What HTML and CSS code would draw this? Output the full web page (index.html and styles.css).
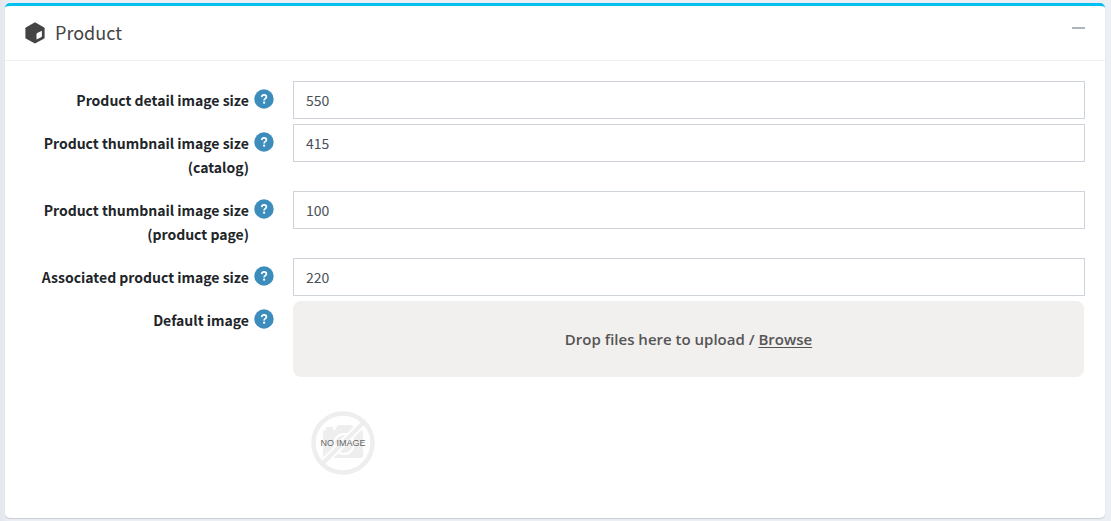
FILE: index.html
```html
<!DOCTYPE html>
<html lang="en">
<head>
<meta charset="utf-8">
<meta name="viewport" content="width=device-width, initial-scale=1">
<title>Product</title>
<link rel="stylesheet" href="styles.css">
</head>
<body>
<svg class="sprite" aria-hidden="true">
  <symbol id="help" viewBox="0 0 20 20">
    <circle cx="10" cy="10" r="9.7" fill="#3c8dbc"/>
    <path d="M7.7 8.1C7.8 6.7 8.7 5.9 10.1 5.9c1.400 0 2.300.8 2.300 2 0 1.700-2.300 1.900-2.300 3.500" fill="none" stroke="#fff" stroke-width="1.700"/>
    <circle cx="10.100" cy="13.700" r="1.150" fill="#fff"/>
  </symbol>
</svg>
<section class="card">
  <header class="card-header">
    <svg class="cube" viewBox="0 0 20 22" aria-hidden="true">
      <path d="M10 .3 18.800 5.200c.5.3.8.6.8 1.100v9.400c0 .5-.3.800-.8 1.100L10 21.600 1.200 16.800c-.5-.3-.8-.6-.8-1.100V6.300c0-.5.300-.8.800-1.100z" fill="#444"/>
      <path d="M11.500 12.200q0-.9.800-1.300L16.900 8.800v5.200q0 .9-.8 1.300L11.500 17.600z" fill="#fff"/>
    </svg>
    <h1 class="card-title">Product</h1>
    <button class="collapse" type="button" aria-label="Collapse"></button>
  </header>
  <form class="card-body">
    <div class="row">
      <div class="label-cell"><label for="detail">Product detail image size</label><svg class="help"><use href="#help"/></svg></div>
      <input class="field" id="detail" type="text" value="550">
    </div>
    <div class="row">
      <div class="label-cell"><label for="catalog">Product thumbnail image size<br>(catalog)</label><svg class="help"><use href="#help"/></svg></div>
      <input class="field" id="catalog" type="text" value="415">
    </div>
    <div class="row">
      <div class="label-cell"><label for="page">Product thumbnail image size<br>(product page)</label><svg class="help"><use href="#help"/></svg></div>
      <input class="field" id="page" type="text" value="100">
    </div>
    <div class="row">
      <div class="label-cell"><label for="associated">Associated product image size</label><svg class="help"><use href="#help"/></svg></div>
      <input class="field" id="associated" type="text" value="220">
    </div>
    <div class="row">
      <div class="label-cell"><span>Default image</span><svg class="help"><use href="#help"/></svg></div>
      <div class="upload">
        <div class="dropzone">Drop files here to upload /&nbsp;<a class="browse" href="#">Browse</a></div>
        <svg class="preview" viewBox="0 0 64 64" role="img" aria-label="No image">
          <g fill="#eee">
            <path d="M12 21q0-2 2-2h1v-3h7v3h2l2-3.500q.5-1.500 2-1.500H40q1.500 0 2 1.500L43.500 19H50q2 0 2 2V45q0 2-2 2H14q-2 0-2-2z"/>
            <circle cx="33" cy="33" r="11" fill="#fff"/>
            <circle cx="33" cy="33" r="9"/>
          </g>
          <path d="M10 54 54 10" stroke="#fff" stroke-width="8"/>
          <path d="M11 53 53 11" stroke="#eee" stroke-width="4"/>
          <circle cx="32" cy="32" r="29.500" fill="none" stroke="#eee" stroke-width="4.500"/>
          <text class="preview-text" x="32" y="35" text-anchor="middle">NO IMAGE</text>
        </svg>
      </div>
    </div>
  </form>
</section>
</body>
</html>
```
FILE: styles.css
```css
* { box-sizing: border-box; }
body {
  margin: 0;
  padding: 3px 6px 2px 5px;
  background: linear-gradient(to right, #e3e7ee, #ecf0f5 12px);
  font-family: "Noto Sans CJK JP", "Noto Sans", sans-serif;
  font-size: 14px;
  line-height: 24px;
  color: #212529;
}
.sprite { display: none; }
.card {
  background: #fff;
  border-top: 3px solid #00c0ef;
  border-radius: 5px;
  box-shadow: 0 1px 1px rgba(0, 0, 0, .15);
}
.card-header {
  display: flex;
  align-items: center;
  height: 55px;
  padding: 0 20px;
  border-bottom: 1px solid #f1f1f2;
}
.cube { width: 20px; height: 22px; margin-right: 10px; }
.card-title { margin: 0; padding-bottom: 2px; font-size: 18px; font-weight: 400; color: #444; }
.collapse {
  align-self: flex-start;
  width: 13px;
  height: 24px;
  margin: 10px 0 0 auto;
  padding: 0;
  border: 0;
  background: linear-gradient(#adb5bd, #adb5bd) center / 13px 2px no-repeat;
}
.card-body { padding: 20px 20px 23px; }
.row {
  display: grid;
  grid-template-columns: 249px minmax(0, 1fr);
  column-gap: 19px;
  align-items: start;
  margin-bottom: 5px;
}
.label-cell {
  display: flex;
  justify-content: flex-end;
  gap: 5px;
  padding: 7px 0;
  font-weight: 600;
  text-align: right;
}
.help { flex: none; width: 20px; height: 20px; margin-top: 1px; }
.field {
  width: 100%;
  height: 38px;
  padding: 6px 12px;
  border: 1px solid #ced4da;
  border-radius: 0;
  background: #fff;
  font: inherit;
  color: #495057;
}
.dropzone {
  display: flex;
  align-items: center;
  justify-content: center;
  height: 76px;
  margin-right: 1px;
  border-radius: 8px;
  background: #f1f0ef;
  font-family: "Open Sans", "Noto Sans", sans-serif;
  font-size: 15px;
  font-weight: 600;
  color: #555;
}
.browse { color: inherit; text-underline-offset: 2px; }
.preview { display: block; width: 64px; height: 64px; margin: 34px 0 15px 18px; }
.preview-text {
  font-family: "Liberation Sans", Arial, sans-serif;
  font-size: 9px;
  fill: #666;
}
```
